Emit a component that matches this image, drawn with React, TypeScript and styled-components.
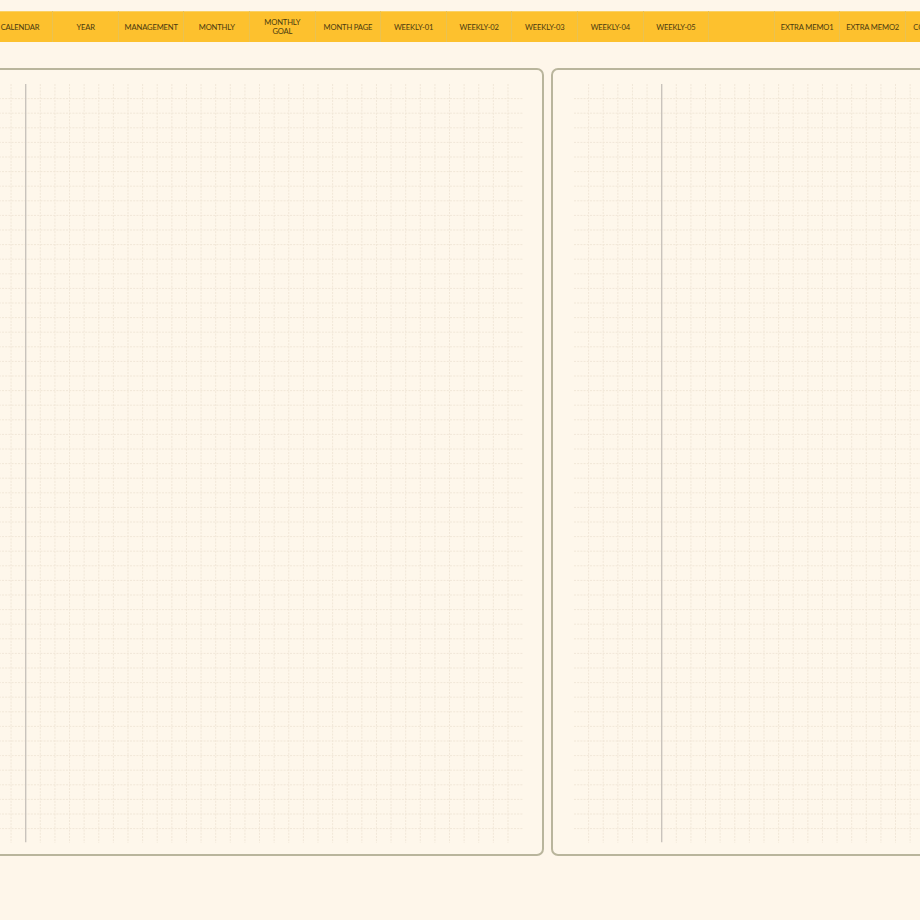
import React from "react";
import styled, { createGlobalStyle } from "styled-components";

const CELL_W = 14.615;
const CELL_H = 14.6;
const COLS = 40;
const ROWS = 52;
const MARGIN_COL = 6;

const Global = createGlobalStyle`
  html, body {
    margin: 0;
    padding: 0;
    background: #fef6ea;
    overflow: hidden;
  }
  body {
    font-family: Lato, "Liberation Sans", sans-serif;
  }
`;

const Page = styled.div`
  width: max-content;
  min-height: 920px;
  padding-top: 11px;
  display: flex;
  flex-direction: column;
  background: #fef6ea;
`;

const NavBar = styled.nav`
  display: flex;
  height: 31px;
  margin-left: -12.3px;
  background: #fdc12e;
  box-shadow: inset 0 1px 0 #fbd163;
`;

const Tab = styled.div`
  width: 65.6px;
  flex: none;
  display: flex;
  align-items: center;
  justify-content: center;
  text-align: center;
  box-sizing: border-box;
  padding-top: 1.5px;
  border-right: 1px solid #eac251;
  font-family: Lato, "Liberation Sans", sans-serif;
  font-size: 7.6px;
  line-height: 9px;
  letter-spacing: -0.15px;
  color: #4a3a10;
  text-transform: uppercase;
  white-space: pre-line;
`;

const Spread = styled.div`
  display: flex;
  gap: 7px;
  margin-top: 26px;
  margin-left: -85px;
`;

const Panel = styled.section`
  flex: none;
  box-sizing: border-box;
  width: 629px;
  height: 787.5px;
  border: 2px solid #b9b59c;
  border-radius: 7px;
  padding: 14px 19px 10.5px 21.4px;
  background: #fef7eb;
`;

const GridSvg = styled.svg`
  display: block;
`;

function Grid() {
  const w = CELL_W * COLS;
  const h = CELL_H * ROWS;
  const verticals = [];
  for (let i = 1; i < COLS; i++) {
    if (i === MARGIN_COL) continue;
    const x = i * CELL_W;
    verticals.push(
      <line key={"v" + i} x1={x} y1={0} x2={x} y2={h} stroke="#f1e7d8" strokeWidth={1} strokeDasharray="2 1.2" />
    );
  }
  const horizontals = [];
  for (let j = 1; j < ROWS; j++) {
    const y = j * CELL_H;
    horizontals.push(
      <line key={"h" + j} x1={0} y1={y} x2={w} y2={y} stroke="#f1e7d8" strokeWidth={1} strokeDasharray="2 1.2" />
    );
  }
  const mx = MARGIN_COL * CELL_W;
  return (
    <GridSvg width={w} height={h} viewBox={`0 0 ${w} ${h}`}>
      {horizontals}
      {verticals}
      <line x1={mx} y1={0} x2={mx} y2={h - 1} stroke="#c9c3bc" strokeWidth={1.4} />
    </GridSvg>
  );
}

const tabs = [
  "Calendar",
  "Year",
  "Management",
  "Monthly",
  "Monthly\nGoal",
  "Month Page",
  "Weekly-01",
  "Weekly-02",
  "Weekly-03",
  "Weekly-04",
  "Weekly-05",
  "",
  "Extra Memo1",
  "Extra Memo2",
  "Contact List",
];

export default function App() {
  return (
    <>
      <Global />
      <Page>
        <NavBar>
          {tabs.map((t, i) => (
            <Tab key={i}>{t}</Tab>
          ))}
        </NavBar>
        <Spread>
          <Panel>
            <Grid />
          </Panel>
          <Panel>
            <Grid />
          </Panel>
        </Spread>
      </Page>
    </>
  );
}
